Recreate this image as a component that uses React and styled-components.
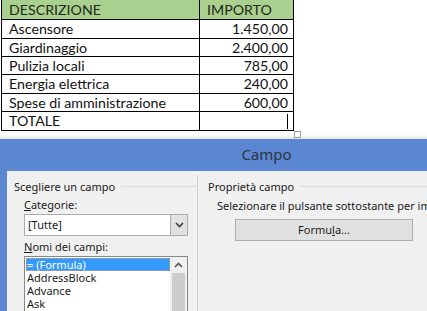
import React from 'react';
import styled, { createGlobalStyle } from 'styled-components';

const rows = [
  { name: 'Ascensore', amount: '1.450,00', h: 19 },
  { name: 'Giardinaggio', amount: '2.400,00', h: 18 },
  { name: 'Pulizia locali', amount: '785,00', h: 18 },
  { name: 'Energia elettrica', amount: '240,00', h: 19 },
  { name: 'Spese di amministrazione', amount: '600,00', h: 18 },
];

const fields = ['= (Formula)', 'AddressBlock', 'Advance', 'Ask'];

export default function App() {
  return (
    <Page>
      <GlobalStyle />
      <Sheet>
        <Grid>
          <HeadCell>DESCRIZIONE</HeadCell>
          <HeadCell>IMPORTO</HeadCell>
          {rows.map((r) => (
            <React.Fragment key={r.name}>
              <Cell $h={r.h}>{r.name}</Cell>
              <Cell $h={r.h} $right>
                {r.amount}
              </Cell>
            </React.Fragment>
          ))}
          <Cell $h={19}>TOTALE</Cell>
          <Cell $h={19} $right>
            <Caret />
          </Cell>
        </Grid>
        <Handle />
      </Sheet>
      <Gap />

      <Dialog>
        <TitleBar>Campo</TitleBar>
        <Client>
          <LeftPane>
            <GroupTitle>Scegliere un campo</GroupTitle>
            <Label>
              <u>C</u>ategorie:
            </Label>
            <Select>
              <SelectValue>[Tutte]</SelectValue>
              <DropButton>
                <svg width="9" height="6" viewBox="0 0 9 6">
                  <path d="M1 1 L4.5 4.5 L8 1" fill="none" stroke="#3c3c3c" strokeWidth="1.6" />
                </svg>
              </DropButton>
            </Select>
            <Label>
              <u>N</u>omi dei campi:
            </Label>
            <ListBox>
              <Items>
                {fields.map((f, i) => (
                  <Item key={f} $selected={i === 0}>
                    {f}
                  </Item>
                ))}
              </Items>
              <ScrollBar>
                <ScrollArrow>
                  <svg width="9" height="6" viewBox="0 0 9 6">
                    <path d="M1 5 L4.5 1.5 L8 5" fill="none" stroke="#505050" strokeWidth="1.6" />
                  </svg>
                </ScrollArrow>
                <Thumb />
              </ScrollBar>
            </ListBox>
          </LeftPane>
          <RightPane>
            <GroupTitle>Proprietà campo</GroupTitle>
            <Hint>Selezionare il pulsante sottostante per im</Hint>
            <Button>
              Formu<u>l</u>a...
            </Button>
          </RightPane>
        </Client>
      </Dialog>
    </Page>
  );
}

const GlobalStyle = createGlobalStyle`
  html, body {
    margin: 0;
    padding: 0;
    background: #ffffff;
    overflow: hidden;
  }
`;

const Page = styled.div`
  width: 427px;
  height: 311px;
  overflow: hidden;
  position: relative;
`;

const Sheet = styled.div`
  position: relative;
  padding-left: 1px;
  width: 300px;
`;

const Grid = styled.div`
  display: grid;
  grid-template-columns: 198px 94px;
  width: 292px;
  border-top: 1px solid #000;
  border-left: 1px solid #000;
  font-family: Lato, 'Liberation Sans', sans-serif;
  font-size: 14.2px;
  color: #111;
`;

const Cell = styled.div`
  height: ${(p) => p.$h - 1}px;
  line-height: ${(p) => p.$h - 1}px;
  border-right: 1px solid #000;
  border-bottom: 1px solid #000;
  padding: ${(p) => (p.$right ? '0 5px 0 0' : '0 0 0 7px')};
  white-space: nowrap;
  overflow: hidden;
  display: flex;
  align-items: center;
  justify-content: ${(p) => (p.$right ? 'flex-end' : 'flex-start')};
`;

const HeadCell = styled(Cell).attrs({ $h: 19 })`
  background: #a9d08e;
  color: #1e2a17;
  margin-top: -1px;
  height: 19px;
`;

const Caret = styled.span`
  display: block;
  width: 1px;
  height: 15px;
  background: #000;
  margin-top: 1px;
`;

const Handle = styled.div`
  position: absolute;
  left: 294px;
  top: 131px;
  width: 5px;
  height: 5px;
  border: 1px solid #9a9a9a;
  background: #fff;
`;

const Gap = styled.div`
  height: 8px;
  background: linear-gradient(#ffffff 0%, #ffffff 45%, #e4e4e4 100%);
`;

const Dialog = styled.div`
  width: 526px;
  background: #5b87d2;
  padding-left: 7px;
  font-family: 'Noto Sans', 'Open Sans', sans-serif;
  font-size: 11px;
  color: #1a1a1a;
`;

const TitleBar = styled.div`
  height: 32px;
  line-height: 31px;
  text-align: center;
  font-size: 15px;
  color: #2e3440;
  margin-left: -7px;
`;

const Client = styled.div`
  background: #f0f0f0;
  height: 160px;
  display: grid;
  grid-template-columns: 190px 1fr;
`;

const LeftPane = styled.div`
  display: flex;
  flex-direction: column;
  padding: 7px 0 0 7px;
`;

const GroupTitle = styled.div`
  display: flex;
  align-items: center;
  gap: 6px;
  height: 16px;
  white-space: nowrap;

  &::after {
    content: '';
    flex: 1;
    height: 1px;
    background: #dcdcdc;
  }
`;

const Label = styled.div`
  margin: 3px 0 0 10px;
  height: 16px;
  line-height: 16px;
`;

const Select = styled.div`
  margin: 1px 0 0 10px;
  width: 162px;
  height: 20px;
  border: 1px solid #acacac;
  background: #fff;
  display: flex;
`;

const SelectValue = styled.div`
  flex: 1;
  padding-left: 3px;
  line-height: 20px;
`;

const DropButton = styled.div`
  width: 16px;
  background: #e1e1e1;
  border-left: 1px solid #acacac;
  display: flex;
  align-items: center;
  justify-content: center;
`;

const ListBox = styled.div`
  margin: 1px 0 0 10px;
  width: 162px;
  height: 70px;
  border: 1px solid #828790;
  background: #fff;
  display: flex;
`;

const Items = styled.div`
  flex: 1;
  padding: 1px 0 0 1px;
`;

const Item = styled.div`
  height: 13px;
  line-height: 13px;
  padding-left: 1px;
  white-space: nowrap;
  background: ${(p) => (p.$selected ? '#3399ff' : 'transparent')};
  color: ${(p) => (p.$selected ? '#ffffff' : '#1a1a1a')};
  outline: ${(p) => (p.$selected ? '1px dotted #d9a25a' : 'none')};
  outline-offset: -1px;
`;

const ScrollBar = styled.div`
  width: 17px;
  background: #f0f0f0;
  display: flex;
  flex-direction: column;
  align-items: center;
`;

const ScrollArrow = styled.div`
  height: 16px;
  width: 17px;
  display: flex;
  align-items: center;
  justify-content: center;
`;

const Thumb = styled.div`
  width: 13px;
  flex: 1;
  background: #cdcdcd;
`;

const RightPane = styled.div`
  border-left: 1px solid #cfcfcf;
  margin-top: 4px;
  padding: 3px 0 0 10px;
  display: flex;
  flex-direction: column;
`;

const Hint = styled.div`
  margin: 4px 0 0 9px;
  height: 16px;
  line-height: 16px;
  white-space: nowrap;
`;

const Button = styled.div`
  margin: 5px 0 0 27px;
  width: 176px;
  height: 20px;
  line-height: 20px;
  border: 1px solid #adadad;
  background: #e1e1e1;
  text-align: center;
`;
